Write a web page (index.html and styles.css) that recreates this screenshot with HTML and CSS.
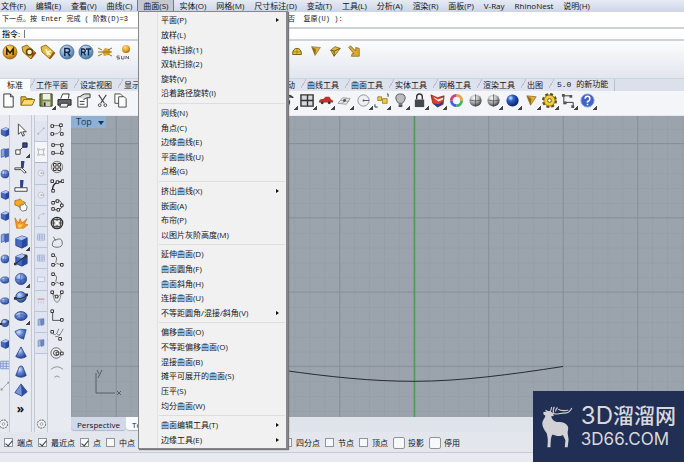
FILE: index.html
```html
<!DOCTYPE html>
<html lang="zh-CN">
<head>
<meta charset="utf-8">
<title>Rhino</title>
<link rel="stylesheet" href="styles.css">
</head>
<body>
<svg class="defs" aria-hidden="true">
  <defs>
    <radialGradient id="gold" cx=".4" cy=".3" r=".8"><stop offset="0" stop-color="#ffe27a"/><stop offset=".6" stop-color="#dd9a1c"/><stop offset="1" stop-color="#8a5208"/></radialGradient>
    <radialGradient id="blue" cx=".35" cy=".3" r=".8"><stop offset="0" stop-color="#d3e2fa"/><stop offset=".45" stop-color="#5f83d2"/><stop offset="1" stop-color="#1c3a94"/></radialGradient>
    <radialGradient id="sky" cx=".4" cy=".3" r=".8"><stop offset="0" stop-color="#cfe4f6"/><stop offset=".6" stop-color="#6f9fcb"/><stop offset="1" stop-color="#2f5f92"/></radialGradient>
    <radialGradient id="gray" cx=".4" cy=".3" r=".8"><stop offset="0" stop-color="#fff"/><stop offset=".5" stop-color="#a5a7aa"/><stop offset="1" stop-color="#1c1c1f"/></radialGradient>
    <radialGradient id="navy" cx=".35" cy=".3" r=".8"><stop offset="0" stop-color="#dce8ff"/><stop offset=".3" stop-color="#2f62cc"/><stop offset="1" stop-color="#04164f"/></radialGradient>
  </defs>
  <symbol id="m" viewBox="0 0 16 16"><circle cx="8" cy="8" r="7" fill="url(#gold)" stroke="#8d6a2a" stroke-width=".8"/><path d="M4.800 11V5L8 9l3.200-4v6" fill="none" stroke="#3a2200" stroke-width="1.700"/></symbol>
  <symbol id="tag" viewBox="0 0 16 16"><path d="M1 3l5-2 9 8-5 6-8-7z" fill="#e2b53c" stroke="#7d560d" stroke-width=".8"/><circle cx="8.500" cy="8" r="3" fill="#fff3c8" stroke="#60400a" stroke-width="1.500"/><path d="M12 8l3 1-5 6" fill="#a23b1a"/></symbol>
  <symbol id="tag2" viewBox="0 0 16 16"><path d="M1 3l5-2 9 8-5 6-8-7z" fill="#e6bd45" stroke="#7d560d" stroke-width=".8"/><path d="M6 5l2 6m3-4L7 8l4 3" stroke="#fff6d0" stroke-width="1.500" fill="none"/><path d="M13 8l2 1-5 6-1-1z" fill="#94551a"/></symbol>
  <symbol id="r" viewBox="0 0 16 16"><circle cx="8" cy="8" r="7" fill="url(#sky)" stroke="#56708e" stroke-width=".9"/><path d="M5.800 12V4.500h2.700q2.200 0 2.200 1.900T8.500 8.300H6m2.500 0L11 12" fill="none" stroke="#13294b" stroke-width="1.500"/></symbol>
  <symbol id="rt" viewBox="0 0 16 16"><circle cx="8" cy="8" r="7" fill="url(#sky)" stroke="#56708e" stroke-width=".9"/><path d="M3.500 11.500V5h2q1.700 0 1.700 1.700T5.500 8.300H4m1.500 0l2 3.200M8 5h5m-2.500 0v6.500" fill="none" stroke="#13294b" stroke-width="1.400"/></symbol>
  <symbol id="burst" viewBox="0 0 16 16"><path d="M5 8l3-4 4 1 2 3-3 3-4 1z" fill="#dba42b"/><path d="M1 4l4 2m-4 6l4-2m10-6l-4 2m4 6l-4-2M1 8h14" stroke="#8b6312" stroke-width=".9"/></symbol>
  <symbol id="sun" viewBox="0 0 16 16"><circle cx="10" cy="5" r="4" fill="url(#gold)"/><path d="M3.500 12H1v1.700h2.500V15H1m4.500-3v3H8v-3m2 3v-3l2.500 3v-3" fill="none" stroke="#555" stroke-width=".8"/></symbol>
  <symbol id="dome" viewBox="0 0 16 16"><path d="M3 12q0-7 5-7t5 7z" fill="#edc632" stroke="#60500f"/><path d="M8 5v7M3 9h10" stroke="#887014" stroke-width=".8"/></symbol>
  <symbol id="fly" viewBox="0 0 16 16"><path d="M3 3l10 1-6 9z" fill="#e2ad32" stroke="#80611c" stroke-width=".7"/><path d="M3 3l5 3-1 7" fill="#8f6c22"/></symbol>
  <symbol id="fly2" viewBox="0 0 16 16"><path d="M3 7l5-4 6 2-7 9z" fill="#dfbd3d" stroke="#685114" stroke-width=".8"/><path d="M3 7l4 1 7-3M7 8v6" stroke="#5c4a19" fill="none"/></symbol>
  <symbol id="arr" viewBox="0 0 16 16"><path d="M2 4l2-2 6 6V4l4 1v9H5l1-3h2z" fill="#dca82e" stroke="#7b5c18" stroke-width=".8"/></symbol>
  <symbol id="new" viewBox="0 0 16 16"><path d="M3 1h7l3 3v11H3z" fill="#fdfdfd" stroke="#333"/><path d="M10 1v3h3" fill="none" stroke="#333"/></symbol>
  <symbol id="open" viewBox="0 0 16 16"><path d="M1 13V4h5l1 2h6v2" fill="#e5b83e" stroke="#7b5c17"/><path d="M1 13l3-6h12l-3 6z" fill="#ffdb6b" stroke="#8b6919"/></symbol>
  <symbol id="save" viewBox="0 0 16 16"><path d="M1 1h13v13H1z" fill="#7d8b48" stroke="#31351f"/><path d="M4 1h8v6H4z" fill="#eef1e5"/><path d="M4 9h8v5H4z" fill="#ccd0c0"/><path d="M5 10h2v4H5z" fill="#333"/></symbol>
  <symbol id="print" viewBox="0 0 16 16"><path d="M4 6l2-5h7l-1 5" fill="#fff" stroke="#333"/><path d="M1 7h14v6H1z" fill="#62656a" stroke="#222"/><path d="M4 11h8l-1 4H3z" fill="#eee" stroke="#333"/></symbol>
  <symbol id="props" viewBox="0 0 16 16"><path d="M2 4h10v11H2z" fill="#fff" stroke="#333"/><path d="M5 3l4-2h6v4h-3L8 7M4 9h5m-5 3h5" fill="#dadada" stroke="#333"/></symbol>
  <symbol id="cut" viewBox="0 0 16 16"><path d="M4 2l6 9M12 2L6 11" stroke="#444" stroke-width="1.200"/><circle cx="5" cy="13" r="1.500" fill="none" stroke="#445"/><circle cx="11" cy="13" r="1.500" fill="none" stroke="#445"/></symbol>
  <symbol id="copy" viewBox="0 0 16 16"><path d="M2 1h6l2 2v8H2z" fill="#fff" stroke="#444"/><path d="M6 4h6l2 2v9H6z" fill="#fff" stroke="#444"/></symbol>
  <symbol id="undo" viewBox="0 0 16 16"><path d="M1 4q8-4 12 1-4-2-7 1 5 2 2 7H4" fill="none" stroke="#333" stroke-width="1.300"/></symbol>
  <symbol id="grid" viewBox="0 0 16 16"><path d="M1 2h13v12H1zM8 2v12M1 8h13" fill="#d5d9dd" stroke="#333" stroke-width="1.500"/></symbol>
  <symbol id="car" viewBox="0 0 16 16"><path d="M1 9l1-2 4-1 2-2h4l2 3 2 1v2H1z" fill="#c3312a"/><circle cx="4.500" cy="10.500" r="1.500" fill="#333"/><circle cx="12" cy="10.500" r="1.500" fill="#333"/></symbol>
  <symbol id="net" viewBox="0 0 16 16"><path d="M1 11l5-6 8 1-4 6zM4 8l9 1M6 11l4-6" fill="#e5e7ea" stroke="#888" stroke-width=".8"/><circle cx="8" cy="8" r="1.500" fill="#555"/></symbol>
  <symbol id="circ" viewBox="0 0 16 16"><circle cx="8" cy="8" r="6" fill="#edeff2" stroke="#8a8e94"/><path d="M8 8h6" stroke="#555"/><circle cx="8" cy="8" r="1" fill="#555"/></symbol>
  <symbol id="sel" viewBox="0 0 16 16"><path d="M4 4h4v4H4zM9 6h5v5H9z" fill="#f2cd3a" stroke="#8a721c" stroke-width=".8"/><path d="M1 12v3h3m10-14h1v3" stroke="#333" fill="none"/></symbol>
  <symbol id="bulb" viewBox="0 0 16 16"><path d="M6 11Q3 8 3 5.500Q3 1 8 1t5 4.500Q13 8 10 11z" fill="#b9bdc1" stroke="#555"/><path d="M6 12h4v3H6z" fill="#555"/></symbol>
  <symbol id="lock" viewBox="0 0 16 16"><path d="M5 7V4q0-3 3-3t3 3v3" fill="none" stroke="#333" stroke-width="1.500"/><path d="M3 7h10v8H3z" fill="#45484d"/></symbol>
  <symbol id="lay" viewBox="0 0 16 16"><path d="M1 2l7 3 7-2-1 9-6 3-5-4z" fill="#d7412a" stroke="#5a1c12" stroke-width=".7"/><path d="M3 11l6 1 5-3-1 3-5 3z" fill="#2c3c8c"/><path d="M4 4l4 3 6-2v2l-5 2-4-3z" fill="#f3ede5"/></symbol>
  <symbol id="wheel" viewBox="0 0 16 16"><g fill="none" stroke-width="3"><path d="M8 2.500A5.500 5.500 0 0 1 13.500 8" stroke="#e8a43a"/><path d="M13.500 8A5.500 5.500 0 0 1 8 13.500" stroke="#43b558"/><path d="M8 13.500A5.500 5.500 0 0 1 2.500 8" stroke="#3f62d9"/><path d="M2.500 8A5.500 5.500 0 0 1 8 2.500" stroke="#d63c78"/></g></symbol>
  <symbol id="ball" viewBox="0 0 16 16"><circle cx="8" cy="8" r="6.500" fill="url(#gray)"/><path d="M2 7.500q6 2 12 0M8 1.500v13" stroke="#444" stroke-width=".7" fill="none"/></symbol>
  <symbol id="nball" viewBox="0 0 16 16"><circle cx="8" cy="8" r="6.500" fill="url(#navy)"/></symbol>
  <symbol id="gearg" viewBox="0 0 16 16"><circle cx="8" cy="8" r="6" fill="none" stroke="#64500f" stroke-width="4" stroke-dasharray="2.700 2"/><circle cx="8" cy="8" r="6" fill="#f0cd3b" stroke="#64500f" stroke-width=".8"/><circle cx="8" cy="8" r="2" fill="#fff" stroke="#64500f"/></symbol>
  <symbol id="dims" viewBox="0 0 16 16"><path d="M3 12V3h7M5 10h8v4" fill="none" stroke="#333"/><path d="M1 1h3v3H1zm8 1h3v3H9zM3 9h3v3H3zm8 4h3v3h-3z" fill="#555"/></symbol>
  <symbol id="help" viewBox="0 0 16 16"><circle cx="8" cy="8" r="7" fill="#3d62c8" stroke="#8ea1d3"/><path d="M5.500 6q0-2.500 2.500-2.500T10.500 6 8 9v1.500M8 11.500V13" fill="none" stroke="#fff" stroke-width="1.600"/></symbol>

  <symbol id="ptr" viewBox="0 0 16 16"><path d="M5 1v12l3-3 2 5 2-1-2-4h4z" fill="#fff" stroke="#333"/></symbol>
  <symbol id="link" viewBox="0 0 16 16"><path d="M2 9h5v5H2z" fill="#fff" stroke="#333"/><path d="M10 1h5v5h-5z" fill="#3b4691" stroke="#222"/><path d="M7 9l3-3" stroke="#222"/></symbol>
  <symbol id="trim" viewBox="0 0 16 16"><path d="M8 1h4l-1 8H8z" fill="#2e3f93"/><path d="M1 9h8l5 5-2 1-4-4H1z" fill="#fff" stroke="#333"/></symbol>
  <symbol id="split" viewBox="0 0 16 16"><path d="M7 1h4l-1 9H7z" fill="#2e3f93"/><path d="M1 10h14v4H1z" fill="#fff" stroke="#333"/></symbol>
  <symbol id="join" viewBox="0 0 16 16"><path d="M1 3l4-1 2-1 3 3 3 1-2 4-4 2-3-2-3-1z" fill="#f2a924" stroke="#9b6310" stroke-width=".8"/><path d="M7 8l3 0 2-2 3 4-1 4-4 1-3-2z" fill="#fff" stroke="#666"/></symbol>
  <symbol id="boom" viewBox="0 0 16 16"><path d="M1 2l4 6 2-5 2 5 6-5-3 6 4 1-5 4H3z" fill="#f4971c" stroke="#c05c0c" stroke-width=".6"/><path d="M5 9l2 1 3-1-2 4H5z" fill="#ffd65a"/></symbol>
  <symbol id="box" viewBox="0 0 16 16"><path d="M2 4l7-3 6 2v9l-6 3-7-3z" fill="#4567bd" stroke="#1c2e72" stroke-width=".8"/><path d="M2 4l7-3 6 2-6 3z" fill="#aec4f0"/><path d="M9 6l6-3v9l-6 3z" fill="#28479e"/></symbol>
  <symbol id="box2" viewBox="0 0 16 16"><path d="M2 4l7-3 6 2v9l-6 3-7-3z" fill="#4567bd" stroke="#1c2e72" stroke-width=".8"/><path d="M2 4l7-3 6 2-6 3z" fill="#aec4f0"/><path d="M9 6l6-3v9l-6 3z" fill="#28479e"/><path d="M2 12L14 3" stroke="#222"/><path d="M0 11h3v3H0zm12-9h3v3h-3z" fill="#333"/></symbol>
  <symbol id="sph" viewBox="0 0 16 16"><circle cx="8" cy="8" r="6.500" fill="url(#blue)" stroke="#263f83" stroke-width=".7"/><path d="M2 8q6 3 12 0M8 2q-2 6 0 12" stroke="#304e99" stroke-width=".7" fill="none"/></symbol>
  <symbol id="sph2" viewBox="0 0 16 16"><circle cx="8" cy="8" r="6" fill="url(#blue)" stroke="#263f83"/><path d="M1 9q7 3 14-3" stroke="#222" fill="none"/><path d="M0 8h3v3H0zm13-4h3v3h-3z" fill="#333"/></symbol>
  <symbol id="ell" viewBox="0 0 16 16"><ellipse cx="8" cy="8" rx="7" ry="5" fill="url(#blue)" stroke="#263f83"/><path d="M2 9q5-5 12 0M8 3v9" stroke="#304e99" stroke-width=".7" fill="none"/></symbol>
  <symbol id="para" viewBox="0 0 16 16"><path d="M1 5q6-4 13-2l-3 11q-7-2-10-9z" fill="url(#blue)" stroke="#263f83" stroke-width=".7"/></symbol>
  <symbol id="cone" viewBox="0 0 16 16"><path d="M8 1l6 11q-6 4-12 0z" fill="url(#blue)" stroke="#1c2e72" stroke-width=".8"/></symbol>
  <symbol id="tcone" viewBox="0 0 16 16"><path d="M6 2q2-2 4 0l4 10q-6 4-12 0z" fill="url(#blue)" stroke="#1c2e72" stroke-width=".8"/></symbol>
  <symbol id="pyr" viewBox="0 0 16 16"><path d="M8 1l7 9-6 5-8-4z" fill="#7395dc" stroke="#1c2e72" stroke-width=".8"/><path d="M8 1l7 9-6 5z" fill="#2f4da3"/></symbol>
  <symbol id="slab" viewBox="0 0 16 16"><path d="M2 3l5-2v12l-5 2z" fill="#8ba8e2" stroke="#33509c"/><path d="M8 2l6-1v12l-6 2z" fill="#4767b8" stroke="#33509c"/></symbol>
  <symbol id="gridb" viewBox="0 0 16 16"><path d="M1 2h14v12H1zM1 6h14M1 10h14M5 2v12M10 2v12" fill="#dfe6f6" stroke="#5974b6"/></symbol>
  <symbol id="line" viewBox="0 0 16 16"><path d="M3 13L13 3" stroke="#858a93"/><path d="M1 12h3v3H1zM12 1h3v3h-3z" fill="#8c9099"/></symbol>
  <symbol id="ptbox" viewBox="0 0 16 16"><path d="M3 3h10v10H3z" fill="none" stroke="#8a8e96"/><path d="M1 1h3v3H1zm11 0h3v3h-3zM1 12h3v3H1zm11 0h3v3h-3z" fill="#fff" stroke="#8a8e96" stroke-width=".8"/></symbol>
  <symbol id="rect" viewBox="0 0 16 16"><path d="M1 4h14v9H1z" fill="#e9edf6" stroke="#8492b4"/></symbol>
  <symbol id="redl" viewBox="0 0 16 16"><path d="M1 4h14" stroke="#c8595c" stroke-width="2"/><path d="M3 7v6m5-6v6m5-6v6" stroke="#9aa3b5"/></symbol>
  <symbol id="arcg" viewBox="0 0 16 16"><path d="M3 12q0-8 10-9" fill="none" stroke="#939aa6"/><path d="M2 11h3v3H2zm10-9h3v3h-3z" fill="#a0a6b0"/></symbol>
  <symbol id="gear" viewBox="0 0 16 16"><circle cx="8" cy="8" r="6" fill="#f0f2f5" stroke="#777c82" stroke-width="1.500" stroke-dasharray="3 1"/><circle cx="8" cy="8" r="2" fill="none" stroke="#888"/></symbol>

  <symbol id="c1" viewBox="0 0 16 16"><path d="M3 3h8q5 9-8 10" fill="none" stroke="#666"/><path d="M1 2h3v3H1zm10-1h3v3h-3zM1 11h3v3H1zm11 0h3v3h-3z" fill="#fff" stroke="#222"/></symbol>
  <symbol id="c2" viewBox="0 0 16 16"><path d="M4 3h9v10H4" fill="none" stroke="#555"/><path d="M2 2h3v3H2zm10 0h3v3h-3zM2 11h3v3H2zm10 0h3v3h-3z" fill="#fff" stroke="#222"/></symbol>
  <symbol id="c3" viewBox="0 0 16 16"><circle cx="8" cy="8" r="6.500" fill="#ddd" stroke="#777"/><path d="M4 4h3v3H4zm5 0h3v3H9zM4 9h3v3H4zm5 0h3v3H9z" fill="#fff" stroke="#222"/></symbol>
  <symbol id="c4" viewBox="0 0 16 16"><path d="M3 14Q2 3 14 3" fill="none" stroke="#222" stroke-width="1.500"/><path d="M1 1h3v3H1zm6 1h3v3H7zm6-1h3v3h-3zM2 12h3v3H2z" fill="#fff" stroke="#222"/></symbol>
  <symbol id="c5" viewBox="0 0 16 16"><path d="M3 5q10-6 11 4-1 6-11 4" fill="none" stroke="#444"/><path d="M2 4h3v3H2zm5-2h3v3H7zm5 5h3v3h-3zM2 11h3v3H2zm6 1h3v3H8z" fill="#fff" stroke="#222"/></symbol>
  <symbol id="c6" viewBox="0 0 16 16"><circle cx="8" cy="8" r="6.500" fill="#ccc" stroke="#333" stroke-width="1.500"/><path d="M4 4h8v8H4zM8 2v12M2 8h12" fill="none" stroke="#444"/><path d="M6 6h4v4H6z" fill="#fff"/></symbol>
  <symbol id="c7" viewBox="0 0 16 16"><path d="M4 2l2 4q7-4 8 2t-6 6-5-5q0-3 4-4" fill="none" stroke="#666"/></symbol>
  <symbol id="c8" viewBox="0 0 16 16"><path d="M4 2q5 3 3 7t7 4M3 13h4" fill="none" stroke="#666"/><path d="M2 1h3v3H2zm0 11h3v3H2zm10 0h3v3h-3z" fill="#fff" stroke="#222"/></symbol>
  <symbol id="c9" viewBox="0 0 16 16"><path d="M3 4q2 10 5 10t5-10M3 4l5 5 5-5" fill="none" stroke="#777"/><path d="M1 1h3v3H1zm5 5h3v3H6zm6-5h3v3h-3z" fill="#fff" stroke="#222"/></symbol>
  <symbol id="c10" viewBox="0 0 16 16"><path d="M3 3v10h10" fill="none" stroke="#444"/><path d="M1 1h3v3H1zm11 10h3v3h-3z" fill="#fff" stroke="#222"/></symbol>
  <symbol id="c11" viewBox="0 0 16 16"><path d="M3 6q1 5 5 1l2-5M8 8q3 4 7-6M6 11q4 1 6-3" fill="none" stroke="#777"/><path d="M1 4h3v3H1zm9 8h3v3h-3z" fill="#fff" stroke="#222"/></symbol>
  <symbol id="c12" viewBox="0 0 16 16"><circle cx="7" cy="8" r="6" fill="none" stroke="#666"/><circle cx="7" cy="8" r="3" fill="none" stroke="#444"/><path d="M7 7h3v3H7zm5 0h3v3h-3z" fill="#fff" stroke="#222"/></symbol>
  <symbol id="c13" viewBox="0 0 16 16"><path d="M1 5q7-6 14 0M5 14q3-3 6 0" fill="none" stroke="#888"/></symbol>
</svg>

<div class="app">
  <nav class="menubar">
    <button>文件(F)</button><button>编辑(E)</button><button>查看(V)</button><button>曲线(C)</button><button class="on">曲面(S)</button><button>实体(O)</button><button>网格(M)</button><button>尺寸标注(D)</button><button>变动(T)</button><button>工具(L)</button><button>分析(A)</button><button>渲染(R)</button><button>面板(P)</button><button>V-Ray</button><button>RhinoNest</button><button>说明(H)</button>
  </nav>

  <div class="history"><span class="lead">下一点。按 Enter 完成 ( 阶数(D)=3</span><span>否&nbsp; 复原(U) ):</span></div>
  <div class="command"><label for="cmd">指令:</label><span class="caret"></span><input id="cmd" type="text"></div>

  <div class="plugins">
    <div class="lead">
      <button aria-label="M"><svg><use href="#m"/></svg></button><button aria-label="O"><svg><use href="#tag"/></svg></button><button aria-label="X"><svg><use href="#tag2"/></svg></button><button aria-label="R"><svg><use href="#r"/></svg></button><button aria-label="RT"><svg><use href="#rt"/></svg></button><button aria-label="光源"><svg><use href="#burst"/></svg></button><button aria-label="SUN"><svg><use href="#sun"/></svg></button>
    </div>
    <div class="rest">
      <button aria-label="穹顶"><svg><use href="#dome"/></svg></button><button aria-label="面光"><svg><use href="#fly"/></svg></button><button aria-label="球光"><svg><use href="#fly2"/></svg></button><button aria-label="箭头"><svg><use href="#arr"/></svg></button>
    </div>
  </div>

  <div class="tabs">
    <div class="lead"><button class="on">标准</button><button>工作平面</button><button>设定视图</button><button>显示</button></div>
    <button>动</button><button>曲线工具</button><button>曲面工具</button><button>实体工具</button><button>网格工具</button><button>渲染工具</button><button>出图</button><button class="mono">5.0 的新功能</button>
  </div>

  <div class="toolbar">
  <div class="tools">
    <button aria-label="新建"><svg><use href="#new"/></svg></button><button aria-label="打开"><svg><use href="#open"/></svg></button><button class="more" aria-label="保存"><svg><use href="#save"/></svg></button><button aria-label="打印"><svg><use href="#print"/></svg></button><button aria-label="属性"><svg><use href="#props"/></svg></button><button aria-label="剪切"><svg><use href="#cut"/></svg></button><button aria-label="复制"><svg><use href="#copy"/></svg></button>
    <button class="more after-menu" aria-label="旋转"><svg><use href="#undo"/></svg></button><button class="more" aria-label="视图"><svg><use href="#grid"/></svg></button><button class="more" aria-label="汽车"><svg><use href="#car"/></svg></button><button class="more" aria-label="平面"><svg><use href="#net"/></svg></button><button class="more" aria-label="圆"><svg><use href="#circ"/></svg></button><button class="more" aria-label="选取"><svg><use href="#sel"/></svg></button><button class="more" aria-label="隐藏"><svg><use href="#bulb"/></svg></button><button class="more" aria-label="锁定"><svg><use href="#lock"/></svg></button><button class="more" aria-label="图层"><svg><use href="#lay"/></svg></button><button aria-label="颜色"><svg><use href="#wheel"/></svg></button><button aria-label="着色"><svg><use href="#ball"/></svg></button><button class="more" aria-label="着色模式"><svg><use href="#ball"/></svg></button><button class="more" aria-label="渲染"><svg><use href="#nball"/></svg></button><button class="more" aria-label="灯光"><svg><use href="#fly"/></svg></button><button class="more" aria-label="选项"><svg><use href="#gearg"/></svg></button><button class="more" aria-label="标注"><svg><use href="#dims"/></svg></button><button class="more" aria-label="说明"><svg><use href="#help"/></svg></button>
  </div>
  </div>

  <main class="work">
    <div class="side side-a">
      <div class="stack">
        <svg><use href="#box"/></svg><svg><use href="#slab"/></svg><svg><use href="#sph"/></svg><svg><use href="#box"/></svg><svg><use href="#box"/></svg><svg><use href="#slab"/></svg><svg><use href="#sph"/></svg><svg><use href="#ell"/></svg><svg><use href="#ell"/></svg><svg><use href="#sph2"/></svg><svg><use href="#box"/></svg><svg><use href="#gridb"/></svg><svg><use href="#line"/></svg>
      </div>
      <svg class="cog"><use href="#gear"/></svg>
    </div>
    <div class="side side-b">
      <div class="stack">
        <button aria-label="选取物件"><svg><use href="#ptr"/></svg></button><button class="more" aria-label="点"><svg><use href="#link"/></svg></button><button aria-label="修剪"><svg><use href="#trim"/></svg></button><button aria-label="分割"><svg><use href="#split"/></svg></button><button aria-label="组合"><svg><use href="#join"/></svg></button><button aria-label="炸开"><svg><use href="#boom"/></svg></button><button class="more" aria-label="立方体"><svg><use href="#box"/></svg></button><button aria-label="角对角立方体"><svg><use href="#box2"/></svg></button><button class="more" aria-label="球体"><svg><use href="#sph"/></svg></button><button aria-label="直径球体"><svg><use href="#sph2"/></svg></button><button class="more" aria-label="椭圆体"><svg><use href="#ell"/></svg></button><button aria-label="抛物面"><svg><use href="#para"/></svg></button><button aria-label="圆锥"><svg><use href="#cone"/></svg></button><button aria-label="平顶锥"><svg><use href="#tcone"/></svg></button><button aria-label="金字塔"><svg><use href="#pyr"/></svg></button><button class="chev">»</button>
      </div>
    </div>
    <div class="side side-c">
      <div class="stack">
        <svg><use href="#line"/></svg><svg class="on"><use href="#ptbox"/></svg><svg><use href="#circ"/></svg><svg><use href="#circ"/></svg><svg><use href="#arcg"/></svg><svg><use href="#gridb"/></svg><svg><use href="#gridb"/></svg><svg><use href="#rect"/></svg><svg><use href="#redl"/></svg><svg><use href="#slab"/></svg><svg><use href="#slab"/></svg>
      </div>
      <svg class="cog"><use href="#gear"/></svg>
    </div>
    <div class="side side-d">
      <div class="stack">
        <button aria-label="控制点曲线"><svg><use href="#c1"/></svg></button><button aria-label="内插点曲线"><svg><use href="#c2"/></svg></button><button aria-label="曲面上的曲线"><svg><use href="#c3"/></svg></button><button aria-label="弧形"><svg><use href="#c4"/></svg></button><button aria-label="圆滑曲线"><svg><use href="#c5"/></svg></button><button aria-label="网线曲线"><svg><use href="#c6"/></svg></button><button aria-label="描绘"><svg><use href="#c7"/></svg></button><button aria-label="两点曲线"><svg><use href="#c8"/></svg></button><button aria-label="混接"><svg><use href="#c8"/></svg></button><button aria-label="抛物线"><svg><use href="#c9"/></svg></button><button aria-label="圆锥线"><svg><use href="#c10"/></svg></button><button aria-label="弹簧线"><svg><use href="#c11"/></svg></button><button aria-label="螺旋线"><svg><use href="#c12"/></svg></button><button aria-label="偏移"><svg><use href="#c13"/></svg></button>
      </div>
    </div>

    <section class="views">
      <div class="viewport">
        <button class="vname">Top</button>
        <svg class="canvas" aria-hidden="true">
          <defs>
            <pattern id="minor" x="0" y="-2" width="14.900" height="14.850" patternUnits="userSpaceOnUse"><path d="M0 .5h15M.5 0v15" stroke="#8e97a2" stroke-opacity=".4"/></pattern>
            <pattern id="major" x="44.700" y="27" width="74.500" height="74.250" patternUnits="userSpaceOnUse"><path d="M0 .5h75M.5 0v75" stroke="#868f9a"/></pattern>
          </defs>
          <rect width="100%" height="100%" fill="url(#minor)"/>
          <rect width="100%" height="100%" fill="url(#major)"/>
          <path d="M343.500 0v600" stroke="#4d9a5a" stroke-width="1.500"/>
          <path d="M210 254C260 261 300 265.300 343 265.300C390 265.300 440 258.500 492 250.500" fill="none" stroke="#262b31"/>
          <path d="M25 257v20h19M26 254l2 4m3-4l-4 8M46 275l4 4m0-4l-4 4" fill="none" stroke="#555d66"/>
        </svg>
      </div>
      <div class="vtabs"><button>Perspective</button><button class="on">Top</button></div>
    </section>
  </main>

  <div class="osnap">
    <div class="lead">
      <label><input type="checkbox" checked>端点</label><label><input type="checkbox" checked>最近点</label><label><input type="checkbox" checked>点</label><label><input type="checkbox">中点</label>
    </div>
    <label><input type="checkbox">四分点</label><label><input type="checkbox">节点</label><label><input type="checkbox">顶点</label><label class="big"><input type="checkbox">投影</label><label class="big"><input type="checkbox">停用</label>
  </div>
  <div class="foot"></div>

  <div class="menu">
    <button class="sub">平面(P)</button><button>放样(L)</button><button>单轨扫掠(1)</button><button>双轨扫掠(2)</button><button>旋转(V)</button><button>沿着路径旋转(I)</button>
    <hr>
    <button>网线(N)</button><button>角点(C)</button><button>边缘曲线(E)</button><button>平面曲线(U)</button><button>点格(G)</button>
    <hr>
    <button class="sub">挤出曲线(X)</button><button>嵌面(A)</button><button>布帘(P)</button><button>以图片灰阶高度(M)</button>
    <hr>
    <button>延伸曲面(D)</button><button>曲面圆角(F)</button><button>曲面斜角(H)</button><button>连接曲面(U)</button><button class="sub">不等距圆角/混接/斜角(V)</button>
    <hr>
    <button>偏移曲面(O)</button><button>不等距偏移曲面(O)</button><button>混接曲面(B)</button><button>摊平可展开的曲面(S)</button><button>压平(S)</button><button>均分曲面(W)</button>
    <hr>
    <button class="sub">曲面编辑工具(T)</button><button class="sub">边缘工具(E)</button>
  </div>

  <aside class="brand">
    <svg class="deer" viewBox="20 16 104 138" aria-hidden="true">
      <path d="M27 40L40 37C45 35 50 36 50 40C56 45 62 48 60 52L52 53C54 62 60 69 70 71C86 70 100 74 105 86C107 93 104 98 104 106L107 126L104 150H95L97 128L89 112C80 118 64 114 57 110C51 117 51 126 50 150H40C43 130 41 118 38 106C30 96 24 86 24 75C24 66 33 58 34 51L28 47z" fill="#d2d2d6"/>
      <path d="M44 39L34 34M46 40C54 38 50 30 54 24M50 40Q62 48 76 45T100 42T117 27M60 42Q56 34 62 23M66 38Q66 30 72 25M74 30Q82 37 106 34" fill="none" stroke="#d2d2d6" stroke-width="3.500"/>
    </svg>
    <div class="words"><div class="cn"><b>3D</b>溜溜网</div><div class="en">3D66.COM</div></div>
  </aside>
</div>
</body>
</html>
```
FILE: styles.css
```css
* { box-sizing: border-box; }
body {
  margin: 0;
  font: 8px/12px "Open Sans", "Noto Sans CJK SC", sans-serif;
  color: #111318;
}
button {
  margin: 0;
  padding: 0;
  border: 0;
  background: none;
  font: inherit;
  color: inherit;
  white-space: nowrap;
}
.defs { position: absolute; width: 0; height: 0; }
svg { display: block; }

.app {
  position: relative;
  display: flex;
  flex-direction: column;
  height: 100vh;
  overflow: hidden;
  background: #e1e5ed;
}

.menubar {
  display: flex;
  height: 12px;
  padding-bottom: 1px;
  background: linear-gradient(#e6ebf5, #ccd5e6);
}
.menubar button { padding: 0 5px; line-height: 10px; }
.menubar button:first-child { padding-left: 1px; }
.menubar .on {
  background: #c3c8d1;
  border: solid #74798a;
  border-width: 0 1px;
}

.history {
  display: flex;
  height: 17px;
  padding-left: 2px;
  border-bottom: 2px solid #cfd2d7;
  background: #fff;
  font: 7px/15px "Liberation Mono", "Noto Sans CJK SC", monospace;
  white-space: pre;
}
.history .lead { flex: 0 0 286px; }
.command {
  display: flex;
  align-items: center;
  height: 12px;
  padding-left: 2px;
  border-bottom: 2px solid #cfd2d7;
  background: #fff;
  font-weight: 500;
}
.caret { width: 1px; height: 8px; margin-left: 4px; background: #777; }
.command input {
  flex: 1;
  min-width: 0;
  height: 8px;
  padding: 0;
  border: 0;
  outline: 0;
  background: none;
  font: inherit;
}

.plugins {
  display: flex;
  height: 37px;
  padding: 2px 0 0 1px;
  background: linear-gradient(#fbfcfd, #e2e6ed);
}
.plugins .lead, .plugins .rest { display: flex; gap: 1px; }
.plugins .lead { flex: 0 0 287px; }
.plugins button { width: 18px; height: 18px; }
.plugins svg { width: 16px; height: 16px; margin: 1px; }
.plugins .rest button { height: 16px; }
.plugins .rest svg { width: 14px; height: 14px; margin: 0 2px; }

.tabs {
  display: flex;
  height: 13px;
  border-top: 1px solid #cdd3e0;
  background: #dbe0ea;
}
.tabs .lead { display: flex; flex: 0 0 281px; }
.tabs button {
  padding: 0 6px;
  line-height: 12px;
  background: linear-gradient(120deg, transparent 4px, #b7bfd2 4px, #b7bfd2 5px, #dde2ed 5px);
}
.tabs .lead .on { background: #fafbfc; padding: 0 7px; }
.tabs .mono {
  padding-left: 8px;
  font-family: "Liberation Mono", "Noto Sans CJK SC", monospace;
  border-right: 1px solid #b7bfd2;
}

.toolbar { height: 24px; background: #f3f5f8; }
.tools {
  display: grid;
  grid-template-columns: repeat(32, 1fr);
  max-width: 597px;
}
.tools .after-menu { grid-column-start: 16; }
.tools button { justify-self: center; width: 18px; height: 19px; }
.tools svg { width: 15px; height: 15px; margin: 1px; }

.more {
  background: linear-gradient(135deg, transparent 50%, #444 50%) right bottom / 4px 4px no-repeat;
}

.work { display: flex; flex: 1; min-height: 0; background: #e7eaf0; }
.side {
  display: flex;
  flex-direction: column;
  padding: 6px 0 0;
  border-right: 1px solid #c2c8d4;
}
.stack {
  display: grid;
  grid-template-rows: repeat(16, 1fr);
  flex: 1;
  min-height: 0;
  margin-bottom: 14px;
  justify-items: center;
  align-items: center;
}
.side-a, .side-c { padding-bottom: 2px; }
.side-a .stack, .side-c .stack { grid-template-rows: repeat(14, 1fr); margin-bottom: 0; }
.side-a { flex: 0 0 10px; overflow: hidden; }
.side-a .stack { justify-items: end; }
.side-a .stack svg { width: 10px; height: 10px; }
.cog { width: 11px; height: 12px; align-self: center; }
.side-a .cog { align-self: end; }
.side-b { flex: 0 0 22px; }
.side-b button, .side-d button { width: 18px; height: 18px; }
.side-b svg { width: 14px; height: 14px; margin: 0 2px; }
.side-b .chev { font-size: 12px; font-weight: 700; line-height: 14px; }
.side-c { flex: 0 0 14px; margin-left: 2px; border-left: 1px solid #c2c8d4; }
.side-c .stack { justify-items: stretch; align-items: stretch; }
.side-c .stack svg {
  width: 100%;
  height: 100%;
  padding: 0 2px;
  opacity: .75;
  border-bottom: 1px solid #aab6d4;
  background: #dde3f0;
}
.side-c .stack .on { background: #f3f5f8; opacity: 1; }
.side-d { flex: 0 0 23px; border-right: 0; padding-right: 5px; }
.side-d svg { width: 14px; height: 14px; margin: 0 2px; }

.views { display: flex; flex: 1; flex-direction: column; min-width: 0; padding-top: 1px; }
.viewport { position: relative; flex: 1; min-height: 0; background: #9ba3ad; }
.canvas { position: absolute; inset: 0; width: 100%; height: 100%; }
.vname {
  display: block;
  position: relative;
  z-index: 1;
  padding: 0 2px 0 5px;
  font-size: 9px;
  line-height: 12px;
  color: #16365f;
  background: #8fb0d2;
}
.vname::after {
  content: "";
  display: inline-block;
  margin-left: 6px;
  border: 3px solid transparent;
  border-top: 4px solid #16365f;
  border-bottom: 0;
}
.vtabs { display: flex; height: 15px; background: #dfe3ea; }
.vtabs button {
  height: 14px;
  padding: 2px 6px 0;
  border-bottom: 1px solid #b4bbcb;
  border-radius: 0 0 4px 4px;
  background: #d3d8e6;
}
.vtabs .on { background: #fafbfc; }

.osnap {
  display: flex;
  align-items: center;
  height: 20px;
  padding: 1px 0 0 4px;
  gap: 5px;
  background: #e3e6ec;
}
.osnap .lead { display: flex; gap: 5px; flex: 0 0 274px; }
.osnap label { display: flex; align-items: center; gap: 4px; white-space: nowrap; }
.osnap input {
  appearance: none;
  width: 9px;
  height: 9px;
  margin: 0;
  border: 1px solid #8f949c;
  background: #f7f8fa;
}
.osnap input:checked::after {
  content: "";
  display: block;
  width: 3px;
  height: 6px;
  margin: 0 2px;
  border: solid #33363c;
  border-width: 0 1px 1px 0;
  transform: rotate(40deg);
}
.osnap .big { gap: 3px; }
.osnap .big input { width: 12px; height: 12px; border-radius: 2px; }
.foot { height: 10px; border-top: 1px solid #c5cad3; background: #e7eaf1; }

.menu {
  position: absolute;
  top: 11px;
  bottom: 13px;
  left: 138px;
  display: flex;
  flex-direction: column;
  width: 150px;
  padding: 1px 0;
  border: 1px solid #85878b;
  border-right-width: 2px;
  background: linear-gradient(90deg, #f0f0f0 18px, #e0e2e3 18px, #e0e2e3 19px, #f1f1f1 19px);
  box-shadow: 1px 1px 1px #777;
}
.menu button {
  display: flex;
  flex: 1 1 0;
  align-items: center;
  min-height: 0;
  padding: 0 7px 0 22px;
}
.menu .sub::after {
  content: "";
  margin-left: auto;
  border: 2px solid transparent;
  border-left: 3px solid #111;
  border-right: 0;
}
.menu hr {
  width: 126px;
  height: 5px;
  margin: 0 0 0 20px;
  border: 0;
  background: linear-gradient(#dcdde0, #dcdde0) center / 100% 1px no-repeat;
}

.brand {
  position: absolute;
  right: 0;
  bottom: 0;
  display: flex;
  align-items: center;
  gap: 7px;
  padding: 12px 8px;
  background: #212f55;
  color: #d9d9dc;
}
.deer { width: 33px; height: 45px; }
.words { white-space: nowrap; }
.cn {
  display: flex;
  align-items: center;
  font: 500 21px/26px Inter, "Noto Sans CJK SC", sans-serif;
}
.cn b { font: 400 24px/26px Inter, sans-serif; }
.en { font: 400 17px/21px Inter, sans-serif; }
```
